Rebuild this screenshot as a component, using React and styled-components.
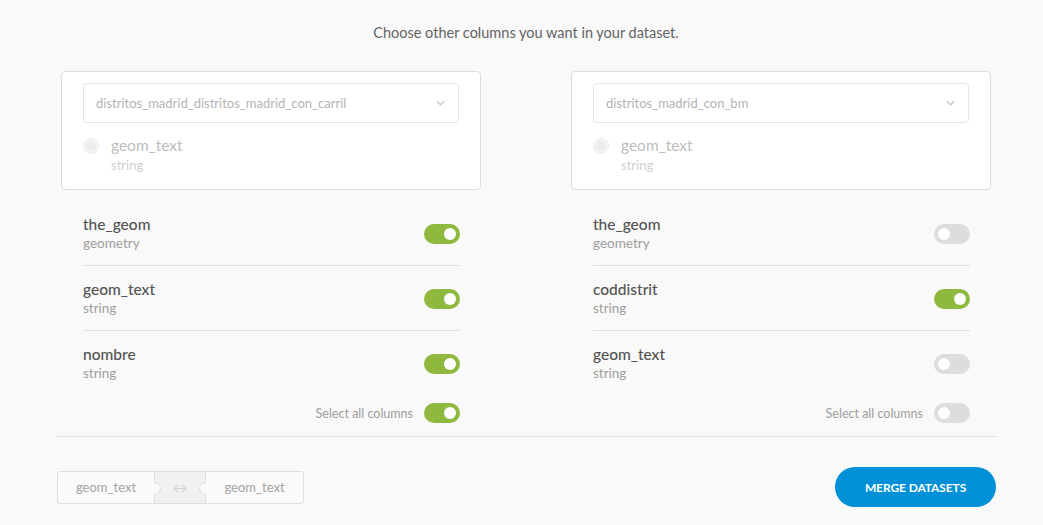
import styled, { createGlobalStyle } from "styled-components";

const GlobalStyle = createGlobalStyle`
  html, body {
    margin: 0;
    padding: 0;
    background: #f9f9f9;
    font-family: Lato, "Open Sans", sans-serif;
  }
`;

const columns = [
  {
    dataset: "distritos_madrid_distritos_madrid_con_carril",
    key: "geom_text",
    all: true,
    fields: [
      { name: "the_geom", type: "geometry", on: true },
      { name: "geom_text", type: "string", on: true },
      { name: "nombre", type: "string", on: true },
    ],
  },
  {
    dataset: "distritos_madrid_con_bm",
    key: "geom_text",
    all: false,
    fields: [
      { name: "the_geom", type: "geometry", on: false },
      { name: "coddistrit", type: "string", on: true },
      { name: "geom_text", type: "string", on: false },
    ],
  },
];

const App = () => {
  return (
    <Page>
      <GlobalStyle />
      <Title>Choose other columns you want in your dataset.</Title>
      <Columns>
        {columns.map((col) => (
          <Column key={col.dataset}>
            <Card>
              <Select>
                <span>{col.dataset}</span>
                <Chevron viewBox="0 0 10 6">
                  <path d="M1 1l4 4 4-4" fill="none" stroke="#c8c8c8" strokeWidth="1.6" />
                </Chevron>
              </Select>
              <KeyRow>
                <Radio />
                <div>
                  <KeyName>{col.key}</KeyName>
                  <KeyType>string</KeyType>
                </div>
              </KeyRow>
            </Card>
            <FieldList>
              {col.fields.map((f) => (
                <Field key={f.name}>
                  <div>
                    <FieldName>{f.name}</FieldName>
                    <FieldType>{f.type}</FieldType>
                  </div>
                  <Toggle $on={f.on} />
                </Field>
              ))}
            </FieldList>
            <SelectAll>
              <span>Select all columns</span>
              <Toggle $on={col.all} />
            </SelectAll>
          </Column>
        ))}
      </Columns>
      <Footer>
        <KeyChip>
          <ChipSide>geom_text</ChipSide>
          <ChipLink>↔</ChipLink>
          <ChipSide>geom_text</ChipSide>
        </KeyChip>
        <MergeButton>MERGE DATASETS</MergeButton>
      </Footer>
    </Page>
  );
};

const Page = styled.div`
  width: 940px;
  margin-left: 56px;
  padding-top: 23px;
`;

const Title = styled.p`
  margin: 0 0 28px;
  text-align: center;
  font-size: 14.5px;
  line-height: 20px;
  color: #636363;
`;

const Columns = styled.div`
  display: grid;
  grid-template-columns: 420px 420px;
  gap: 90px;
  padding: 0 5px;
  border-bottom: 1px solid #e0e0e0;
`;

const Column = styled.div`
  display: flex;
  flex-direction: column;
`;

const Card = styled.div`
  background: #fff;
  border: 1px solid #dcdcdc;
  border-radius: 4px;
  padding: 11px 21px 13px;
`;

const Select = styled.div`
  height: 38px;
  border: 1px solid #e4e4e4;
  border-radius: 4px;
  display: flex;
  align-items: center;
  justify-content: space-between;
  padding: 0 13px 0 12px;
  font-size: 13px;
  color: #b4b4b4;
`;

const Chevron = styled.svg`
  width: 9px;
  height: 6px;
`;

const KeyRow = styled.div`
  display: flex;
  align-items: flex-start;
  gap: 12px;
  margin-top: 13px;
`;

const Radio = styled.span`
  width: 14px;
  height: 14px;
  margin-top: 2px;
  border-radius: 50%;
  border: 1px solid #ececec;
  background: #ececec;
  box-shadow: inset 0 0 0 2px #f6f6f6;
`;

const KeyName = styled.div`
  font-size: 15.5px;
  line-height: 18px;
  color: #bdbdbd;
`;

const KeyType = styled.div`
  font-size: 13px;
  line-height: 22px;
  color: #cfcfcf;
`;

const FieldList = styled.div`
  margin: 11px 21px 0 22px;
`;

const Field = styled.div`
  display: flex;
  align-items: center;
  justify-content: space-between;
  height: 64px;
  box-sizing: border-box;
  padding-top: 1px;
  & + & {
    height: 65px;
    border-top: 1px solid #e0e0e0;
  }
`;

const FieldName = styled.div`
  font-size: 15.5px;
  line-height: 18px;
  font-weight: 500;
  color: #535353;
`;

const FieldType = styled.div`
  font-size: 13.5px;
  line-height: 20px;
  color: #9e9e9e;
`;

const Toggle = styled.span`
  position: relative;
  flex: none;
  width: 36px;
  height: 20px;
  border-radius: 10px;
  background: ${(p) => (p.$on ? "#8eb83e" : "#dddddd")};
  &::after {
    content: "";
    position: absolute;
    top: 4px;
    left: ${(p) => (p.$on ? "20px" : "4px")};
    width: 12px;
    height: 12px;
    border-radius: 50%;
    background: #fff;
  }
`;

const SelectAll = styled.div`
  display: flex;
  justify-content: flex-end;
  align-items: center;
  gap: 11px;
  margin: 8px 21px 13px 0;
  font-size: 12.5px;
  color: #9e9e9e;
`;

const Footer = styled.div`
  display: flex;
  align-items: center;
  justify-content: space-between;
  padding: 30px 0 0 1px;
`;

const KeyChip = styled.div`
  display: flex;
  height: 33px;
`;

const ChipSide = styled.div`
  width: 98px;
  display: flex;
  align-items: center;
  justify-content: center;
  border: 1px solid #dedede;
  border-radius: 3px 0 0 3px;
  background: #fafafa;
  font-size: 13px;
  color: #a3a3a3;
  box-sizing: border-box;
  &:last-child {
    width: 99px;
    border-radius: 0 3px 3px 0;
  }
`;

const ChipLink = styled.div`
  position: relative;
  width: 50px;
  display: flex;
  align-items: center;
  justify-content: center;
  background: #f1f1f1;
  border-top: 1px solid #dedede;
  border-bottom: 1px solid #dedede;
  box-sizing: border-box;
  color: #cfcfcf;
  font-size: 14px;
  &::before,
  &::after {
    content: "";
    position: absolute;
    top: 10px;
    width: 6px;
    height: 11px;
    background: #fafafa;
    border: 1px solid #dedede;
  }
  &::before {
    left: -1px;
    border-left: none;
    border-radius: 0 7px 7px 0;
  }
  &::after {
    right: -1px;
    border-right: none;
    border-radius: 7px 0 0 7px;
  }
`;

const MergeButton = styled.button`
  width: 161px;
  height: 40px;
  border: none;
  border-radius: 20px;
  background: #0090d7;
  color: #fff;
  font-family: Lato, "Open Sans", sans-serif;
  font-weight: 700;
  font-size: 12px;
  letter-spacing: -0.1px;
`;

export default App;
